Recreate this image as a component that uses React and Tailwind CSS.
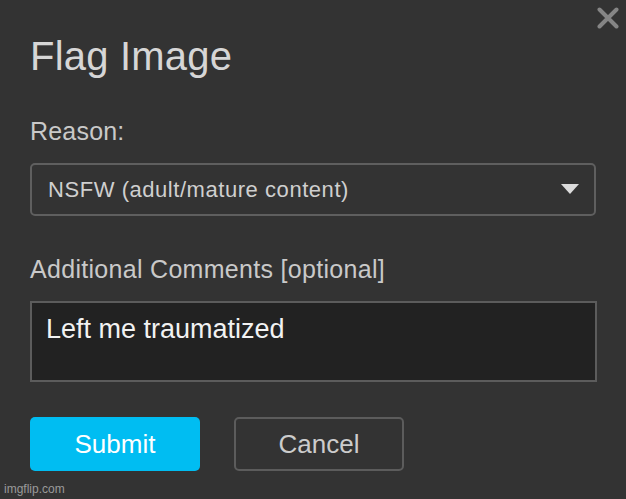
import { useState } from "react";

const font = { fontFamily: '"Liberation Sans", Arial, sans-serif' };

export default function App() {
  const [reason] = useState("NSFW (adult/mature content)");
  const [comment, setComment] = useState("Left me traumatized");

  return (
    <div
      className="relative w-[626px] h-[499px] bg-[#333333] overflow-hidden"
      style={font}>
      {/* close button */}
      <button
        className="absolute top-[6px] right-[6px] w-[24px] h-[24px] flex items-center justify-center"
        aria-label="Close">
        <svg width="22" height="22" viewBox="0 0 22 22">
          <path
            d="M2.5 2.5 L19.5 19.5 M19.5 2.5 L2.5 19.5"
            stroke="#858585"
            strokeWidth="4"
            strokeLinecap="round"
          />
        </svg>
      </button>

      <div className="flex flex-col pl-[30px] pr-[30px] pt-[32px]">
        <h1 className="text-[40px] leading-[48px] text-[#d6d6d6] font-normal tracking-[0.2px]">
          Flag Image
        </h1>

        <label className="mt-[35px] text-[25px] leading-[32px] text-[#c9c9c9] tracking-[0.2px]">
          Reason:
        </label>

        <div className="mt-[16px] h-[53px] w-[566px] border-2 border-[#5f5f5f] rounded-[5px] flex items-center justify-between pl-[16px] pr-[15px]">
          <span className="text-[22px] leading-[26px] text-[#cfcfcf] tracking-[0.55px]">
            {reason}
          </span>
          <svg width="18" height="11" viewBox="0 0 18 11">
            <path d="M0 0 L18 0 L9 10 Z" fill="#dcdcdc" />
          </svg>
        </div>

        <label className="mt-[37px] text-[25px] leading-[32px] text-[#c9c9c9] tracking-[0.3px]">
          Additional Comments [optional]
        </label>

        <textarea
          value={comment}
          onChange={(e) => setComment(e.target.value)}
          className="mt-[16px] h-[81px] w-[567px] bg-[#222222] border-2 border-[#5c5c5c] pt-[10px] pl-[14px] text-[27px] leading-[32px] text-[#f2f2f2] resize-none outline-none"
          style={font}
        />

        <div className="mt-[35px] flex gap-[34px]">
          <button className="w-[170px] h-[54px] rounded-[5px] bg-[#00bdf2] text-white text-[26px] leading-[32px]">
            Submit
          </button>
          <button className="w-[170px] h-[54px] rounded-[5px] border-2 border-[#5c5c5c] text-[#cccccc] text-[26px] leading-[32px]">
            Cancel
          </button>
        </div>
      </div>

      <span className="absolute left-[4px] bottom-[3px] text-[12px] leading-[14px] text-[#9a9a9a]">
        imgflip.com
      </span>
    </div>
  );
}
